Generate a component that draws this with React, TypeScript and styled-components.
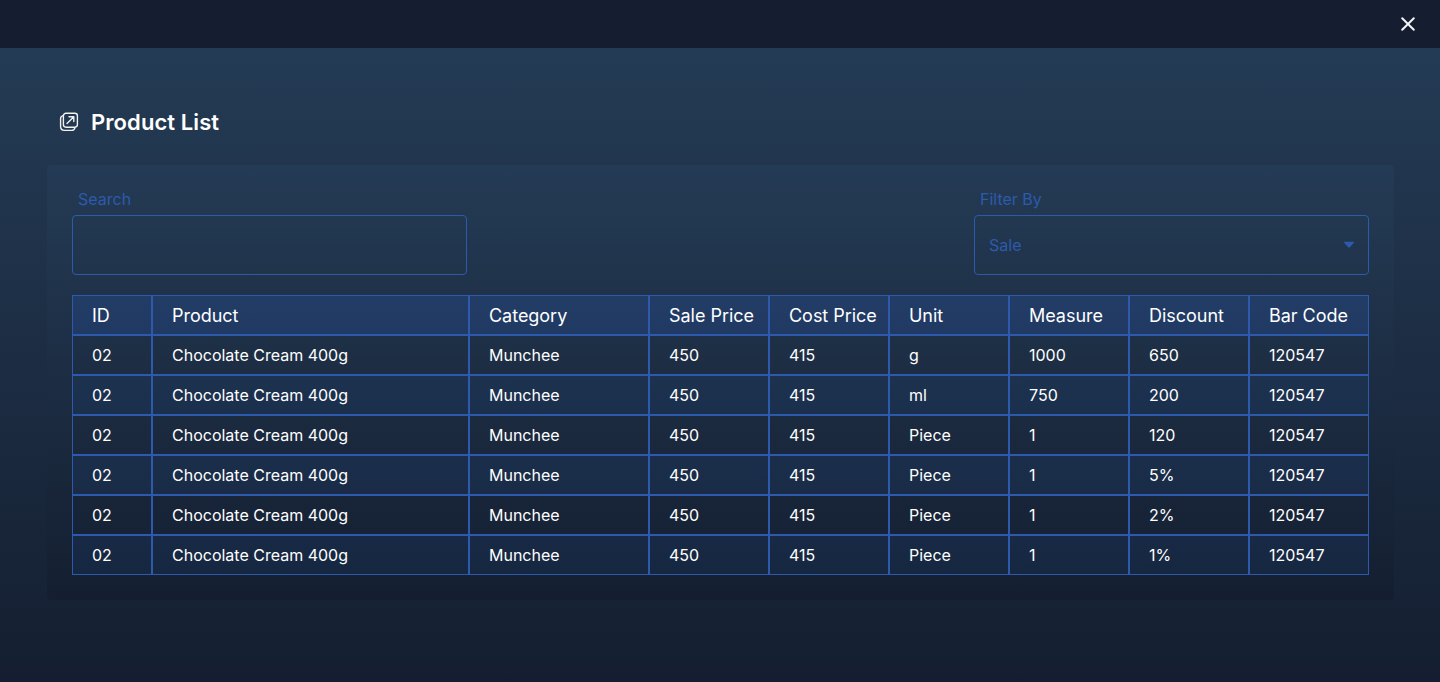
import React from "react";
import styled, { createGlobalStyle } from "styled-components";

const GlobalStyle = createGlobalStyle`
  * { box-sizing: border-box; }
  body {
    margin: 0;
    background: #151d30;
    color: #fff;
    font-family: Inter, "Liberation Sans", sans-serif;
  }
`;

const surface = "linear-gradient(180deg, #243b55 0%, #141e30 100%)";
const line = "#2d5aac";

const Screen = styled.div`
  display: flex;
  flex-direction: column;
  height: 682px;
  overflow: hidden;
`;

const TitleBar = styled.header`
  display: flex;
  align-items: center;
  justify-content: flex-end;
  flex: none;
  height: 48px;
  padding-right: 24px;
  background: #151d30;
`;

const CloseButton = styled.button`
  display: flex;
  padding: 0;
  border: 0;
  background: none;
  color: #f4f5f7;
`;

const Content = styled.main`
  flex: none;
  height: 632px;
  padding: 60px 46px 0 47px;
  background: ${surface};
`;

const Heading = styled.div`
  display: flex;
  align-items: center;
  gap: 12px;
  height: 28px;
  padding-left: 12px;
`;

const Title = styled.h1`
  margin: 0;
  font-size: 22px;
  line-height: 28px;
  font-weight: 600;
  letter-spacing: 0.08px;
`;

const Panel = styled.section`
  height: 435px;
  margin-top: 29px;
  padding: 24px 25px 0;
  border-radius: 4px;
  background: ${surface};
`;

const Filters = styled.div`
  display: flex;
  justify-content: space-between;
`;

const Field = styled.div`
  width: 395px;
`;

const Label = styled.label`
  display: block;
  height: 26px;
  padding-left: 6px;
  font-size: 16px;
  line-height: 20px;
  color: ${line};
`;

const SearchInput = styled.input`
  display: block;
  width: 100%;
  height: 60px;
  padding: 0 14px;
  border: 1px solid ${line};
  border-radius: 4px;
  outline: none;
  background: transparent;
  color: ${line};
  font: inherit;
`;

const Select = styled.div`
  display: flex;
  align-items: center;
  justify-content: space-between;
  height: 60px;
  padding: 0 9px 0 14px;
  border: 1px solid ${line};
  border-radius: 4px;
  font-size: 16px;
  color: ${line};
`;

const Table = styled.table`
  width: 1297px;
  margin-top: 20px;
  table-layout: fixed;
  border-collapse: separate;
  border-spacing: 0;
`;

const HeadCell = styled.th<{ $width: number }>`
  width: ${({ $width }) => $width}px;
  height: 40px;
  padding: 0 0 0 19px;
  border: 1px solid ${line};
  background: rgba(37, 75, 145, 0.4);
  font-size: 18px;
  font-weight: 400;
  letter-spacing: -0.03px;
  text-align: left;
  white-space: nowrap;
`;

const Row = styled.tr<{ $tinted: boolean }>`
  background: ${({ $tinted }) => ($tinted ? "rgba(29, 72, 130, 0.2)" : "transparent")};
`;

const Cell = styled.td`
  height: 40px;
  padding: 0 0 0 19px;
  border: 1px solid ${line};
  font-size: 16px;
`;

const columns: [string, number][] = [
  ["ID", 80],
  ["Product", 317],
  ["Category", 180],
  ["Sale Price", 120],
  ["Cost Price", 120],
  ["Unit", 120],
  ["Measure", 120],
  ["Discount", 120],
  ["Bar Code", 120],
];

const units = [
  ["g", "1000", "650"],
  ["ml", "750", "200"],
  ["Piece", "1", "120"],
  ["Piece", "1", "5%"],
  ["Piece", "1", "2%"],
  ["Piece", "1", "1%"],
];

const rows = units.map((u) => ["02", "Chocolate Cream 400g", "Munchee", "450", "415", ...u, "120547"]);

const OpenIcon = () => (
  <svg width="20" height="20" viewBox="0 0 20 20" fill="none" stroke="#f1f1ee" strokeWidth="1.4" strokeLinecap="round" strokeLinejoin="round">
    <rect x="4.4" y="1.2" width="14" height="14" rx="2.6" />
    <path d="M4.2 3.6C2.6 3.9 1.6 5 1.6 6.6V14.6C1.6 17 3 18.4 5.4 18.4H12.6C14.4 18.4 15.6 17.4 16 15.6" />
    <path d="M8 11.6L14.6 5M10 4.8H14.8V9.6" />
  </svg>
);

const CloseIcon = () => (
  <svg width="16" height="16" viewBox="0 0 16 16" fill="none" stroke="currentColor" strokeWidth="2" strokeLinecap="round">
    <path d="M2.2 2.2L13.8 13.8M13.8 2.2L2.2 13.8" />
  </svg>
);

const Caret = () => (
  <svg width="20" height="20" viewBox="0 0 20 20" fill={line}>
    <path d="M5.6 6.7H14.4Q15.6 6.8 14.8 7.8L11 11.9Q10 12.9 9 11.9L5.2 7.8Q4.4 6.8 5.6 6.7Z" />
  </svg>
);

export default function App() {
  return (
    <Screen>
      <GlobalStyle />
      <TitleBar>
        <CloseButton aria-label="Close">
          <CloseIcon />
        </CloseButton>
      </TitleBar>
      <Content>
        <Heading>
          <OpenIcon />
          <Title>Product List</Title>
        </Heading>
        <Panel>
          <Filters>
            <Field>
              <Label htmlFor="search">Search</Label>
              <SearchInput id="search" />
            </Field>
            <Field>
              <Label as="div">Filter By</Label>
              <Select>
                Sale
                <Caret />
              </Select>
            </Field>
          </Filters>
          <Table>
            <thead>
              <tr>
                {columns.map(([name, width]) => (
                  <HeadCell key={name} $width={width}>{name}</HeadCell>
                ))}
              </tr>
            </thead>
            <tbody>
              {rows.map((row, r) => (
                <Row key={r} $tinted={r % 2 === 1}>
                  {row.map((value, c) => (
                    <Cell key={c}>{value}</Cell>
                  ))}
                </Row>
              ))}
            </tbody>
          </Table>
        </Panel>
      </Content>
    </Screen>
  );
}
